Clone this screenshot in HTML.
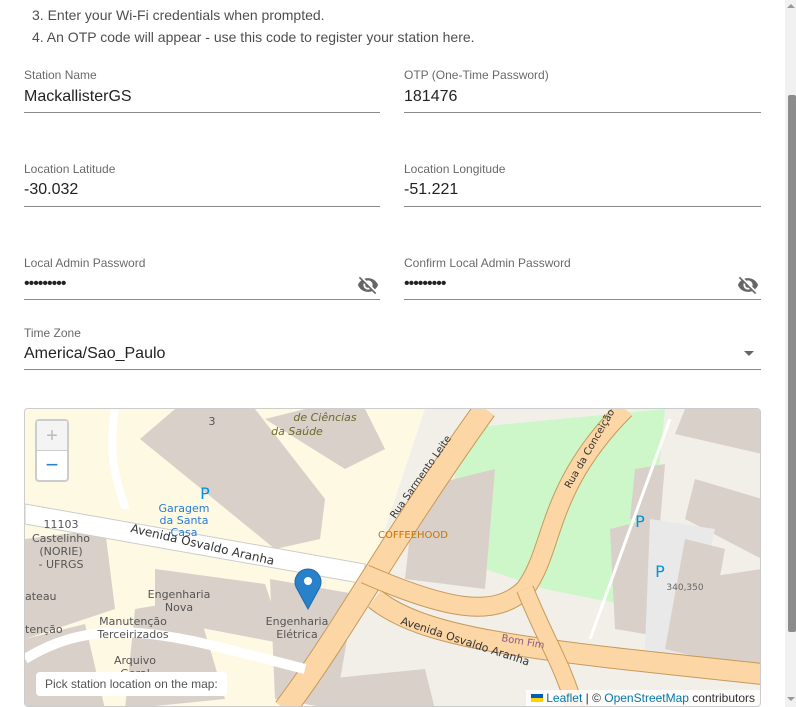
<!DOCTYPE html>
<html><head><style>
*{box-sizing:border-box;margin:0;padding:0}
body{width:796px;height:707px;overflow:hidden;background:#fff;font-family:"Liberation Sans",Arial,sans-serif;position:relative;color:#222}
.t{position:absolute;font-size:14px;color:rgba(0,0,0,.7)}
.lab{position:absolute;font-size:12px;color:rgba(0,0,0,.6)}
.val{position:absolute;font-size:16px;color:#222}
.line{position:absolute;height:1px;background:#8a8a8a}
.dots{position:absolute;font-size:16px;letter-spacing:-1px;color:#222}
.sb{position:absolute;left:785px;top:0;width:11px;height:707px;background:#f1f1f1;z-index:5}
.th{position:absolute;left:3px;top:95px;width:8px;height:537px;background:#8c8c8c;border-radius:2px}
</style></head><body>
<div class="t" style="left:32px;top:7px">3. Enter your Wi-Fi credentials when prompted.</div>
<div class="t" style="left:32px;top:29px">4. An OTP code will appear - use this code to register your station here.</div>

<div class="lab" style="left:24px;top:68px">Station Name</div>
<div class="val" style="left:24px;top:88px">MackallisterGS</div>
<div class="line" style="left:24px;top:112px;width:356px"></div>
<div class="lab" style="left:404px;top:68px">OTP (One-Time Password)</div>
<div class="val" style="left:404px;top:88px">181476</div>
<div class="line" style="left:404px;top:112px;width:357px"></div>

<div class="lab" style="left:24px;top:162px">Location Latitude</div>
<div class="val" style="left:24px;top:181px">-30.032</div>
<div class="line" style="left:24px;top:206px;width:356px"></div>
<div class="lab" style="left:404px;top:162px">Location Longitude</div>
<div class="val" style="left:404px;top:181px">-51.221</div>
<div class="line" style="left:404px;top:206px;width:357px"></div>

<div class="lab" style="left:24px;top:256px">Local Admin Password</div>
<div class="dots" style="left:24px;top:275px">•••••••••</div>
<div class="line" style="left:24px;top:299px;width:356px"></div>
<div class="lab" style="left:404px;top:256px">Confirm Local Admin Password</div>
<div class="dots" style="left:404px;top:275px">•••••••••</div>
<div class="line" style="left:404px;top:299px;width:357px"></div>
<svg style="position:absolute;left:357px;top:274px" width="22" height="22" viewBox="0 0 24 24"><path fill="#666" d="M12 7c2.76 0 5 2.24 5 5 0 .65-.13 1.26-.36 1.83l2.92 2.92c1.51-1.26 2.7-2.89 3.430-4.75-1.73-4.39-6-7.5-11-7.5-1.4 0-2.74.25-3.98.7l2.16 2.16C10.74 7.13 11.35 7 12 7zM2 4.27l2.28 2.28.46.46C3.08 8.3 1.78 10.02 1 12c1.73 4.39 6 7.5 11 7.5 1.55 0 3.03-.3 4.38-.84l.42.42L19.73 22 21 20.73 3.27 3 2 4.27zM7.53 9.8l1.55 1.55c-.05.21-.08.43-.08.65 0 1.66 1.34 3 3 3 .22 0 .44-.03.65-.08l1.55 1.55c-.67.33-1.41.53-2.2.53-2.76 0-5-2.24-5-5 0-.79.2-1.53.53-2.2z"/></svg>
<svg style="position:absolute;left:737px;top:274px" width="22" height="22" viewBox="0 0 24 24"><path fill="#666" d="M12 7c2.76 0 5 2.24 5 5 0 .65-.13 1.26-.36 1.83l2.92 2.92c1.51-1.26 2.7-2.89 3.43-4.75-1.73-4.39-6-7.5-11-7.5-1.4 0-2.74.25-3.98.7l2.16 2.16C10.74 7.13 11.35 7 12 7zM2 4.27l2.28 2.28.46.46C3.08 8.3 1.78 10.02 1 12c1.73 4.39 6 7.5 11 7.5 1.55 0 3.03-.3 4.38-.84l.42.42L19.73 22 21 20.73 3.27 3 2 4.27zM7.53 9.8l1.55 1.55c-.05.21-.08.43-.08.65 0 1.66 1.34 3 3 3 .22 0 .44-.03.65-.08l1.55 1.55c-.67.33-1.41.53-2.2.53-2.76 0-5-2.24-5-5 0-.79.2-1.53.53-2.2z"/></svg>

<div class="lab" style="left:24px;top:326px">Time Zone</div>
<div class="val" style="left:24px;top:345px">America/Sao_Paulo</div>
<div style="position:absolute;left:744px;top:351px;border-left:5px solid transparent;border-right:5px solid transparent;border-top:5px solid #666"></div>
<div class="line" style="left:24px;top:369px;width:737px"></div>

<div style="position:absolute;left:24px;top:408px;width:737px;height:299px;border:1px solid #ccc;border-radius:4px;overflow:hidden;background:#f2efe9">
<svg width="737" height="300" style="position:absolute;left:0;top:0">
<rect x="0" y="0" width="400" height="300" fill="#fdf9e2"/>
<polygon points="400,0 737,0 737,300 300,300" fill="#f2efe9"/>
<polygon points="430,20 640,0 620,200 520,180 430,150" fill="#cdf7c9"/>
<polygon points="115,30 150,0 230,0 300,90 295,130 250,140" fill="#d9d0c9"/>
<polygon points="240,10 280,0 340,0 360,40 320,60" fill="#d9d0c9"/>
<polygon points="0,130 80,120 90,200 0,230" fill="#d9d0c9"/>
<polygon points="130,160 240,175 260,235 130,210" fill="#d9d0c9"/>
<polygon points="110,200 170,190 200,290 100,300" fill="#d9d0c9"/>
<polygon points="245,170 330,185 310,300 250,290" fill="#d9d0c9"/>
<polygon points="0,230 60,215 80,300 0,300" fill="#d9d0c9"/>
<polygon points="390,80 470,60 460,180 380,170" fill="#d9d0c9"/>
<polygon points="610,60 640,55 635,115 605,110" fill="#d9d0c9"/>
<polygon points="660,0 737,0 737,45 650,25" fill="#d9d0c9"/>
<polygon points="670,70 737,90 737,150 660,110" fill="#d9d0c9"/>
<polygon points="585,120 625,110 650,230 590,220" fill="#d9d0c9"/>
<polygon points="625,110 690,120 660,250 620,240" fill="#e9e9e9"/>
<polygon points="660,130 700,140 680,250 640,240" fill="#d9d0c9"/>
<polygon points="670,170 737,160 737,270 670,260" fill="#d9d0c9"/>
<polygon points="300,270 400,260 410,300 300,300" fill="#d9d0c9"/>
<polygon points="0,95 340,155 340,175 0,115" fill="#fff" stroke="#ccc"/>
<path d="M260,300 C320,220 360,140 460,0" stroke="#c69a5a" stroke-width="24" fill="none"/>
<path d="M260,300 C320,220 360,140 460,0" stroke="#fcd6a4" stroke-width="22" fill="none"/>
<path d="M340,165 C420,200 470,210 500,180 C530,140 520,80 600,0" stroke="#c69a5a" stroke-width="20" fill="none"/>
<path d="M340,165 C420,200 470,210 500,180 C530,140 520,80 600,0" stroke="#fcd6a4" stroke-width="18" fill="none"/>
<path d="M350,190 C400,230 500,240 737,265" stroke="#c69a5a" stroke-width="22" fill="none"/>
<path d="M350,190 C400,230 500,240 737,265" stroke="#fcd6a4" stroke-width="20" fill="none"/>
<path d="M500,180 C520,230 540,260 550,300" stroke="#c69a5a" stroke-width="18" fill="none"/>
<path d="M500,180 C520,230 540,260 550,300" stroke="#fcd6a4" stroke-width="16" fill="none"/>
<path d="M645,10 L565,230" stroke="#fff" stroke-width="3"/>
<path d="M90,0 C80,60 100,90 100,100" stroke="#fff" stroke-width="8" fill="none"/>
<path d="M0,250 C80,200 160,230 280,260" stroke="#fff" stroke-width="10" fill="none"/>
<g font-family="DejaVu Sans,sans-serif" font-size="11" fill="#333">
<text x="105" y="123" transform="rotate(13 105 123)" font-size="12">Avenida Osvaldo Aranha</text>
<text x="375" y="215" transform="rotate(18 375 215)" font-size="11">Avenida Osvaldo Aranha</text>
<text x="370" y="110" transform="rotate(-55 370 110)" font-size="10">Rua Sarmento Leite</text>
<text x="545" y="80" transform="rotate(-60 545 80)" font-size="10">Rua da Conceição</text>
<text x="159" y="103" fill="#2b7bd6" text-anchor="middle">Garagem</text>
<text x="159" y="115" fill="#2b7bd6" text-anchor="middle">da Santa</text>
<text x="159" y="127" fill="#2b7bd6" text-anchor="middle">Casa</text>
<text x="180" y="90" fill="#0092da" font-size="16" text-anchor="middle">P</text>
<text x="615" y="118" fill="#0092da" font-size="16" text-anchor="middle">P</text>
<text x="635" y="168" fill="#0092da" font-size="16" text-anchor="middle">P</text>
<text x="660" y="181" fill="#666" font-size="9" text-anchor="middle">340,350</text>
<text x="36" y="119" fill="#555" text-anchor="middle">11103</text>
<text x="36" y="133" fill="#555" text-anchor="middle">Castelinho</text>
<text x="36" y="146" fill="#555" text-anchor="middle">(NORIE)</text>
<text x="36" y="159" fill="#555" text-anchor="middle">- UFRGS</text>
<text x="0" y="191" fill="#555">ateau</text>
<text x="0" y="224" fill="#555">tenção</text>
<text x="108" y="216" fill="#555" text-anchor="middle">Manutenção</text>
<text x="108" y="229" fill="#555" text-anchor="middle">Terceirizados</text>
<text x="154" y="189" fill="#555" text-anchor="middle">Engenharia</text>
<text x="154" y="202" fill="#555" text-anchor="middle">Nova</text>
<text x="272" y="216" fill="#555" text-anchor="middle">Engenharia</text>
<text x="272" y="229" fill="#555" text-anchor="middle">Elétrica</text>
<text x="110" y="255" fill="#555" text-anchor="middle">Arquivo</text>
<text x="110" y="268" fill="#555" text-anchor="middle">Geral</text>
<text x="300" y="12" fill="#6b6b2c" text-anchor="middle" font-style="italic">de Ciências</text>
<text x="272" y="26" fill="#6b6b2c" text-anchor="middle" font-style="italic">da Saúde</text>
<text x="187" y="16" fill="#555" text-anchor="middle">3</text>
<text x="388" y="129" fill="#c77400" font-size="10" text-anchor="middle">COFFEEHOOD</text>
<text x="476" y="232" fill="#8a5a8a" font-size="10" transform="rotate(10 476 232)">Bom Fim</text>
</g>
<path d="M283,200 L271,178 A13,13 0 1 1 295,178Z" fill="#2a81cb" stroke="#1f6aa8"/>
<circle cx="283" cy="172" r="4" fill="#fff"/>
</svg>
<div style="position:absolute;left:10px;top:10px;width:34px;height:63px;background:#fff;border:2px solid rgba(0,0,0,.2);border-radius:4px">
<div style="height:30px;border-bottom:1px solid #ccc;text-align:center;font-size:20px;line-height:30px;color:#bbb;background:#f4f4f4">+</div>
<div style="height:29px;text-align:center;font-size:22px;line-height:27px;color:#2a81cb">−</div></div>
<div style="position:absolute;left:11px;top:263px;background:#fff;border-radius:4px;padding:5px 9px;font-size:12px;color:#555">Pick station location on the map:</div>
<div style="position:absolute;right:0;bottom:0;background:rgba(255,255,255,.8);font-size:12px;padding:0 5px;color:#333;height:16px;line-height:16px"><span style="display:inline-block;width:12px;height:8px;background:linear-gradient(#005bbb 50%,#ffd500 50%)"></span> <span style="color:#0078a8">Leaflet</span> | © <span style="color:#0078a8">OpenStreetMap</span> contributors</div>
</div>

<div class="sb"><div class="th"></div>
<div style="position:absolute;left:2px;top:4px;border-left:4px solid transparent;border-right:4px solid transparent;border-bottom:4px solid #999"></div>
<div style="position:absolute;left:2px;top:697px;border-left:4px solid transparent;border-right:4px solid transparent;border-top:4px solid #999"></div></div>
</body></html>
